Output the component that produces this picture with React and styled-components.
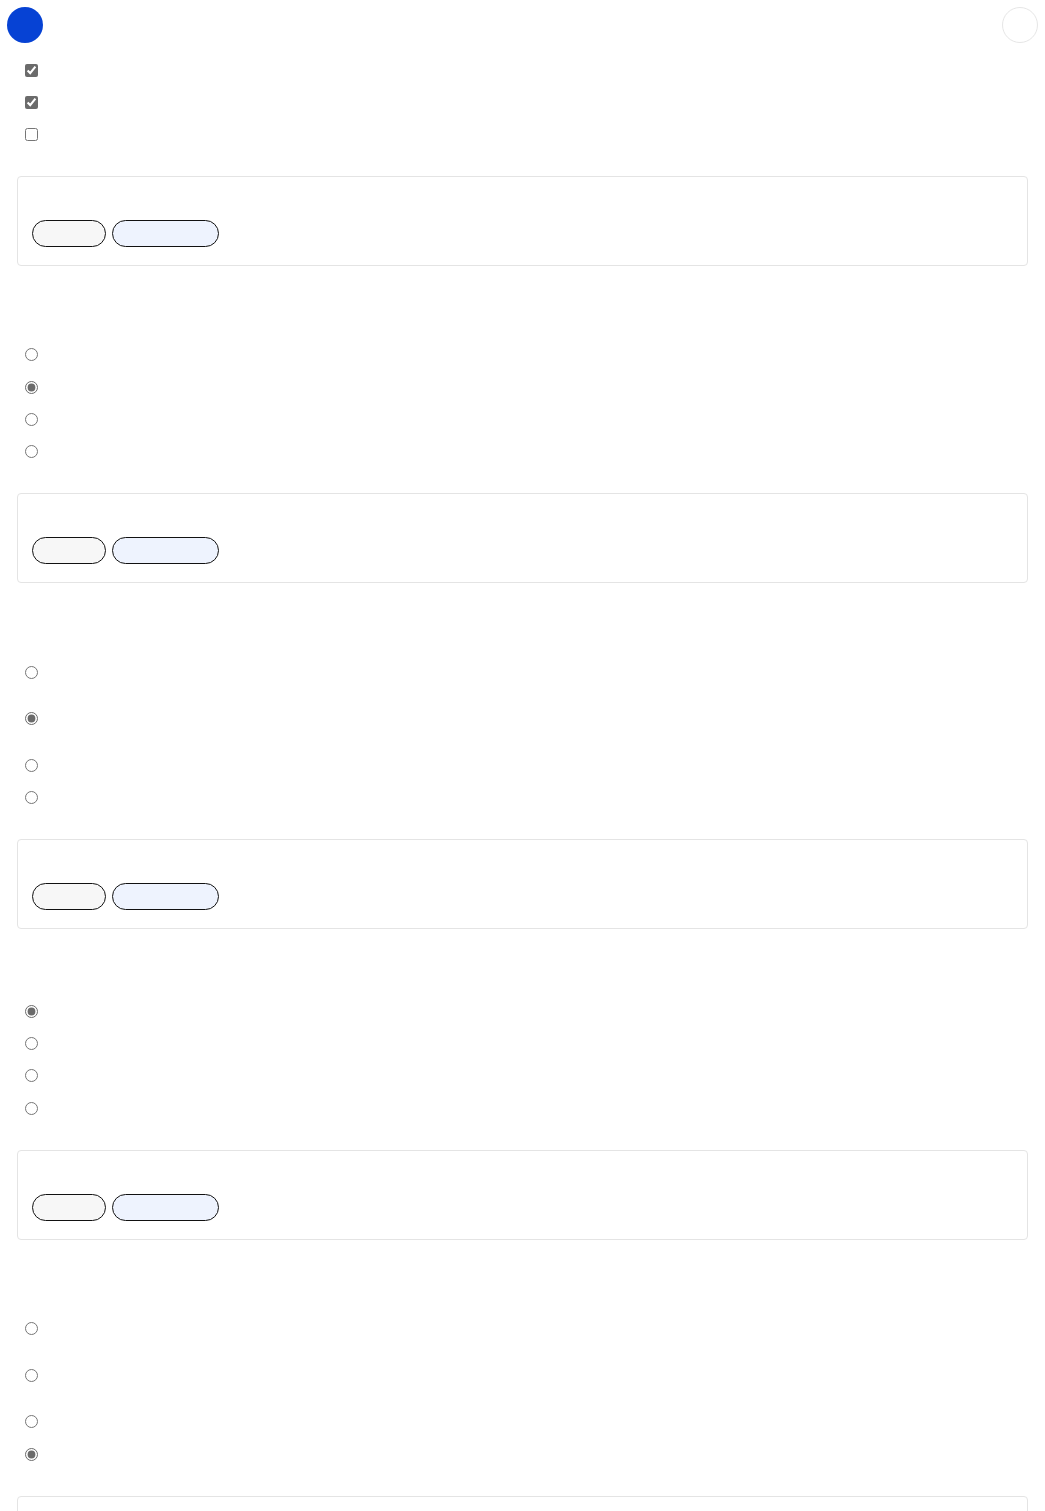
import React from 'react';
import styled, { createGlobalStyle } from 'styled-components';

const GlobalStyle = createGlobalStyle`
  html, body {
    margin: 0;
    padding: 0;
    background: #ffffff;
    font-family: 'Liberation Sans', Arial, sans-serif;
  }
`;

const Page = styled.div`
  display: flex;
  flex-direction: column;
  padding: 0 17px;
`;

const Header = styled.header`
  display: flex;
  justify-content: space-between;
  align-items: center;
  height: 50px;
  margin: 0 -10px 4px;
`;

const Avatar = styled.div`
  width: 36px;
  height: 36px;
  border-radius: 50%;
  background: ${({ $filled }) => ($filled ? '#0642d4' : '#ffffff')};
  border: ${({ $filled }) => ($filled ? 'none' : '1px solid #e6e6e6')};
  box-sizing: border-box;
`;

const Group = styled.div`
  display: flex;
  flex-direction: column;
  margin-top: ${({ $top }) => $top || 0}px;
  margin-bottom: 25px;
`;

const Row = styled.label`
  display: flex;
  align-items: flex-start;
  height: ${({ $tall }) => ($tall ? 46.67 : 32.33)}px;
  padding: 9.5px 0 0 8px;
  box-sizing: border-box;
`;

const Control = styled.input`
  width: 13px;
  height: 13px;
  margin: 0;
  accent-color: #6b6b6b;
`;

const Card = styled.section`
  border: 1px solid #e4e4e4;
  border-radius: 4px;
  padding: 43px 14px 18px;
  display: flex;
  gap: 6px;
`;

const Pill = styled.button`
  height: 27px;
  width: ${({ $wide }) => ($wide ? 107 : 74)}px;
  border: 1px solid #111111;
  border-radius: 14px;
  background: ${({ $wide }) => ($wide ? '#eef3fe' : '#f7f7f7')};
  padding: 0;
  box-sizing: border-box;
`;

const Actions = () => (
  <Card>
    <Pill type="button" />
    <Pill type="button" $wide />
  </Card>
);

const quizzes = [
  { top: 73, checked: 1, tall: [] },
  { top: 73, checked: 1, tall: [0, 1] },
  { top: 66, checked: 0, tall: [] },
  { top: 73, checked: 3, tall: [0, 1] },
];

const App = () => (
  <>
    <GlobalStyle />
    <Page>
      <Header>
        <Avatar $filled />
        <Avatar />
      </Header>

      <Group>
        <Row><Control type="checkbox" defaultChecked /></Row>
        <Row><Control type="checkbox" defaultChecked /></Row>
        <Row><Control type="checkbox" /></Row>
      </Group>
      <Actions />

      {quizzes.map((q, i) => (
        <React.Fragment key={i}>
          <Group $top={q.top}>
            {[0, 1, 2, 3].map((j) => (
              <Row key={j} $tall={q.tall.includes(j)}>
                <Control type="radio" name={`q${i}`} defaultChecked={q.checked === j} />
              </Row>
            ))}
          </Group>
          <Actions />
        </React.Fragment>
      ))}
    </Page>
  </>
);

export default App;
